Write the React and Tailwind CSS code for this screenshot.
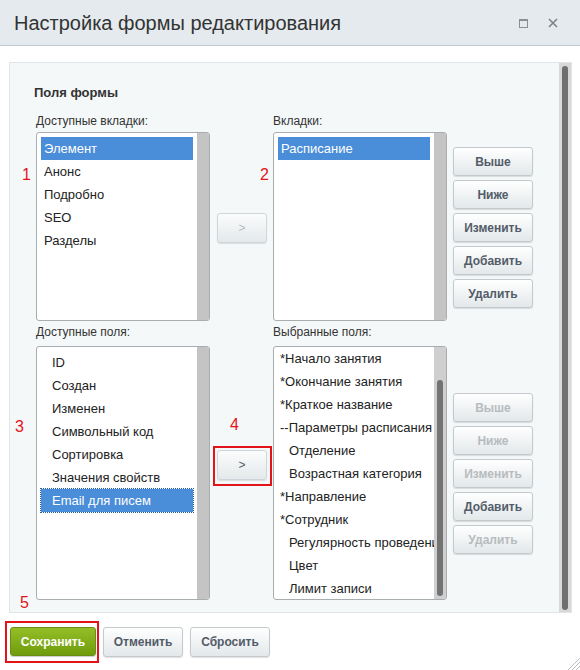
import React from "react";

const font = { fontFamily: '"Liberation Sans", Arial, sans-serif' };

const Btn = ({ children, disabled, className = "" }) => (
  <div
    className={`flex h-[29px] w-[80px] items-center justify-center rounded-[3px] border border-[#c3c9cc] bg-gradient-to-b from-[#ffffff] to-[#e3e8ea] text-[12px] font-bold shadow-[0_1px_1px_rgba(0,0,0,0.12)] ${
      disabled ? "text-[#b7bcbf]" : "text-[#535c69]"
    } ${className}`}
  >
    {children}
  </div>
);

const Arrow = ({ disabled }) => (
  <div
    className={`flex h-[30px] w-[50px] items-center justify-center rounded-[3px] border border-[#cfd5d8] bg-gradient-to-b from-[#fbfcfc] to-[#e4e9eb] text-[12px] shadow-[0_1px_1px_rgba(0,0,0,0.1)] ${
      disabled ? "text-[#b5babd]" : "text-[#555c63]"
    }`}
  >
    &gt;
  </div>
);

const ListBox = ({ items, h, pad, textPad, scroll, dotted }) => (
  <div
    className={`flex w-[174px] overflow-hidden rounded-[3px] border border-[#a8adb0] bg-white ${h}`}
  >
    <div className={`flex-1 overflow-hidden ${pad}`}>
      {items.map((it) => (
        <div
          key={it.t}
          className={`flex h-[23px] items-center whitespace-nowrap text-[13px] ${
            it.sel ? "bg-[#4a8dd8] text-white" : "text-[#222]"
          } ${it.sel && dotted ? "outline outline-1 outline-dotted outline-[#2a5d9a]" : ""}`}
          style={{ paddingLeft: (it.ind ? textPad + 9 : textPad) + "px" }}
        >
          {it.t}
        </div>
      ))}
    </div>
    <div className={`relative w-[12px] shrink-0 ${scroll ? "bg-[#cfcfcf]" : "bg-[#c4c4c4]"}`}>
      {scroll && (
        <div className="absolute left-[3px] top-[33px] bottom-[3px] w-[6px] rounded-full bg-[#737373]" />
      )}
    </div>
  </div>
);

const Num = ({ n, className }) => (
  <span className={`absolute text-[16px] text-[#e3131a] ${className}`}>{n}</span>
);

export default function App() {
  const tabsAvail = [
    { t: "Элемент", sel: true },
    { t: "Анонс" },
    { t: "Подробно" },
    { t: "SEO" },
    { t: "Разделы" },
  ];
  const fieldsAvail = [
    { t: "ID" },
    { t: "Создан" },
    { t: "Изменен" },
    { t: "Символьный код" },
    { t: "Сортировка" },
    { t: "Значения свойств" },
    { t: "Email для писем", sel: true },
  ];
  const chosen = [
    { t: "*Начало занятия" },
    { t: "*Окончание занятия" },
    { t: "*Краткое название" },
    { t: "--Параметры расписания" },
    { t: "Отделение", ind: true },
    { t: "Возрастная категория", ind: true },
    { t: "*Направление" },
    { t: "*Сотрудник" },
    { t: "Регулярность проведения", ind: true },
    { t: "Цвет", ind: true },
    { t: "Лимит записи", ind: true },
  ];

  return (
    <div className="relative h-[670px] w-[580px] overflow-hidden bg-white" style={font}>
      {/* header */}
      <div className="flex h-[46px] items-center justify-between border-b border-[#c2c9cd] bg-[#e4eaed] pl-[14px] pr-[22px]">
        <div className="text-[20px] text-[#333]">Настройка формы редактирования</div>
        <div className="flex items-center gap-[20px] pt-[1px]">
          <div className="h-[9px] w-[9px] border border-[#8a8f93] border-t-2" />
          <svg width="10" height="10" viewBox="0 0 10 10">
            <path d="M1 1 L9 9 M9 1 L1 9" stroke="#7d8286" strokeWidth="1.6" />
          </svg>
        </div>
      </div>

      {/* body */}
      <div className="pl-[9px] pr-[8px] pt-[16px]">
        <div className="flex h-[551px] border border-[#dfe5e8] bg-[#f5f8f9]">
          <div className="relative flex-1 pl-[26px] pt-[22px]">
            <Num n="1" className="left-[12px] top-[100px]" />
            <Num n="2" className="left-[250px] top-[100px]" />
            <Num n="3" className="left-[5px] top-[352px]" />
            <Num n="4" className="left-[220px] top-[350px]" />
            <Num n="5" className="left-[10px] top-[528px]" />

            <div className="ml-[-2px] text-[13px] font-bold leading-[16px] text-[#333]">Поля формы</div>

            <div className="mt-[13px] flex text-[12px] leading-[14px] text-[#333]">
              <div className="w-[237px]">Доступные вкладки:</div>
              <div>Вкладки:</div>
            </div>

            <div className="mt-[4px] flex">
              <ListBox items={tabsAvail} h="h-[189px]" pad="pl-[4px] pr-[4px] pt-[4px]" textPad={3} />
              <div className="ml-[7px] mt-[81px]">
                <Arrow disabled />
              </div>
              <div className="ml-[6px]">
                <ListBox items={[{ t: "Расписание", sel: true }]} h="h-[189px]" pad="pl-[4px] pr-[4px] pt-[4px]" textPad={3} />
              </div>
              <div className="ml-[6px] mt-[15px] flex flex-col gap-[4px]">
                <Btn>Выше</Btn>
                <Btn>Ниже</Btn>
                <Btn>Изменить</Btn>
                <Btn>Добавить</Btn>
                <Btn>Удалить</Btn>
              </div>
            </div>

            <div className="mt-[4px] flex text-[12px] leading-[14px] text-[#333]">
              <div className="w-[237px]">Доступные поля:</div>
              <div>Выбранные поля:</div>
            </div>

            <div className="mt-[7px] flex">
              <ListBox items={fieldsAvail} h="h-[254px]" pad="pl-[4px] pr-[4px] pt-[4px]" textPad={11} dotted />
              <div className="relative ml-[7px] mt-[104px]">
                <div className="absolute left-[-4px] top-[-4px] h-[40px] w-[59px] border-2 border-[#e3131a]" />
                <Arrow />
              </div>
              <div className="ml-[6px]">
                <ListBox items={chosen} h="h-[254px]" pad="pl-[1px] pt-0" textPad={5} scroll />
              </div>
              <div className="ml-[6px] mt-[47px] flex flex-col gap-[4px]">
                <Btn disabled>Выше</Btn>
                <Btn disabled>Ниже</Btn>
                <Btn disabled>Изменить</Btn>
                <Btn>Добавить</Btn>
                <Btn disabled>Удалить</Btn>
              </div>
            </div>
          </div>
          <div className="relative w-[12px] shrink-0 bg-[#d8d8d8]">
            <div className="absolute left-[3px] top-[3px] bottom-[2px] w-[6px] rounded-full bg-[#6f6f6f]" />
          </div>
        </div>
      </div>

      {/* footer */}
      <div className="ml-[10px] mt-[14px] flex gap-[7px]">
        <div className="relative">
          <div className="absolute left-[-5px] top-[-6px] h-[42px] w-[94px] border-2 border-[#e3131a]" />
          <div className="flex h-[29px] w-[86px] items-center justify-center rounded-[3px] border border-[#6a8f14] bg-gradient-to-b from-[#95bf26] to-[#6f9c0c] text-[12px] font-bold text-white shadow-[0_1px_1px_rgba(0,0,0,0.2)]">
            Сохранить
          </div>
        </div>
        <Btn className="h-[30px] w-[79px]">Отменить</Btn>
        <Btn className="h-[30px] w-[79px]">Сбросить</Btn>
      </div>

      <svg className="absolute bottom-0 right-0" width="16" height="16" viewBox="0 0 16 16">
        <path d="M16 4 L4 16 M16 8 L8 16 M16 12 L12 16" stroke="#b9bec1" strokeWidth="1" />
      </svg>
    </div>
  );
}
